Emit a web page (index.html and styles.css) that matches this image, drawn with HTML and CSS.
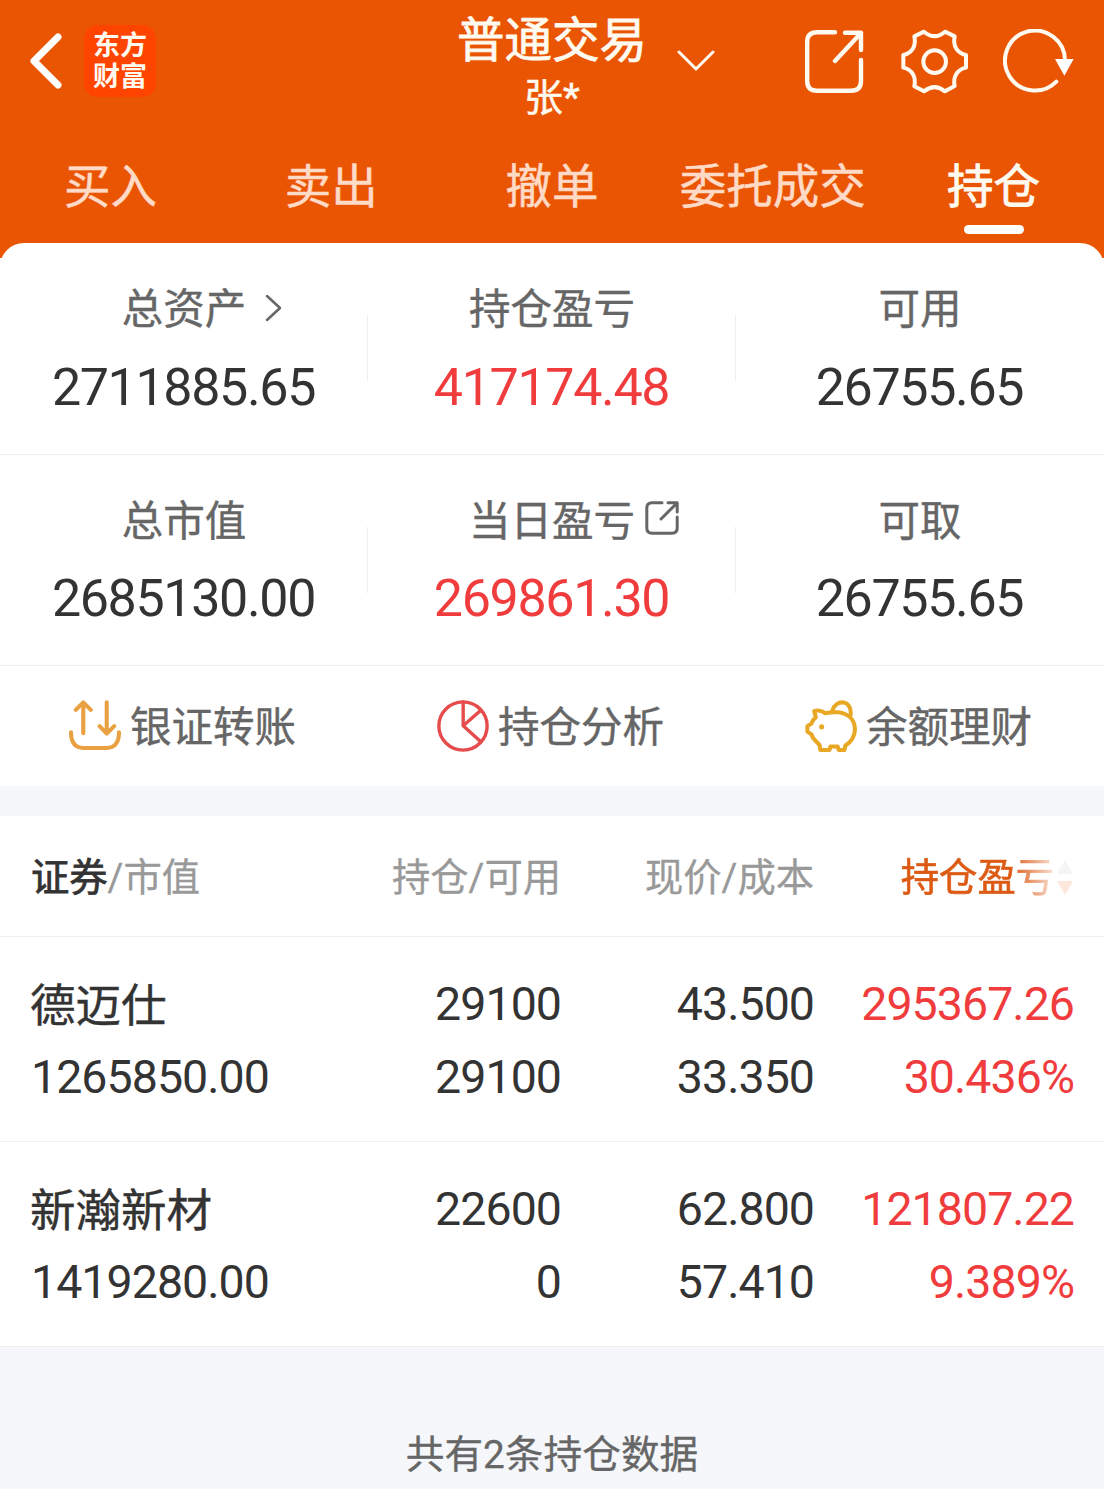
FILE: index.html
```html
<!DOCTYPE html>
<html lang="zh-CN">
<head>
    <meta charset="UTF-8">
    <meta name="viewport" content="width=device-width, initial-scale=1.0">
    <title>普通交易</title>
    <link rel="stylesheet" href="styles.css">
</head>
<body>
    <header class="header">
        <div class="topbar">
            <div class="topbar-left">
                <svg class="icon-back" viewBox="0 0 32 56" fill="none"><path d="M28 4L4 28L28 52"/></svg>
                <div class="logo"><span>东方</span><span>财富</span></div>
            </div>
            <div class="topbar-title">
                <div>
                    <h1>普通交易</h1>
                    <p>张*</p>
                </div>
                <svg class="icon-down" viewBox="0 0 38 22" fill="none"><path d="M2 2L19 19L36 2"/></svg>
            </div>
            <div class="topbar-right">
                <svg class="icon-share" viewBox="0 0 60 66" fill="none"><path d="M31 3.3H13Q3.2 3.3 3.2 13V52Q3.2 61.8 13 61.8H47Q57 61.8 57 52V31M31 32L57 4M41 3.8H57V21"/></svg>
                <svg class="icon-gear" viewBox="0 0 204 198" fill="none"><path d="M40 22L69 8Q101 35 132 8L161 22C155 50 168 72 195 78V116C168 122 155 144 161 171L132 187Q101 162 69 187L40 172C46 144 34 122 7 116V78C34 72 46 50 40 22Z"/><circle cx="101" cy="98" r="34"/></svg>
                <svg class="icon-refresh" viewBox="0 0 216 198" fill="none"><path d="M186 94A90 90 0 1 0 160 158"/><path class="arrow" d="M156 90H212L184 140Z"/></svg>
            </div>
        </div>
        <nav class="tabs">
            <a class="tab">买入</a>
            <a class="tab">卖出</a>
            <a class="tab">撤单</a>
            <a class="tab">委托成交</a>
            <a class="tab active">持仓</a>
        </nav>
    </header>

    <section class="summary">
        <div class="stats">
            <div class="stat">
                <div class="stat-label">总资产<svg class="icon-more" viewBox="0 0 17 28" fill="none"><path d="M2 2L15 14L2 26"/></svg></div>
                <div class="stat-value">2711885.65</div>
            </div>
            <div class="stat">
                <div class="stat-label">持仓盈亏</div>
                <div class="stat-value red">417174.48</div>
            </div>
            <div class="stat">
                <div class="stat-label">可用</div>
                <div class="stat-value">26755.65</div>
            </div>
        </div>
        <div class="stats">
            <div class="stat">
                <div class="stat-label">总市值</div>
                <div class="stat-value">2685130.00</div>
            </div>
            <div class="stat">
                <div class="stat-label">当日盈亏<svg class="icon-link" viewBox="0 0 34 34" fill="none"><path d="M17 1.8H7Q1.8 1.8 1.8 7V27Q1.8 32.2 7 32.2H27Q32.2 32.2 32.2 27V16M16 18L32 2M23 1.8H32.2V11"/></svg></div>
                <div class="stat-value red">269861.30</div>
            </div>
            <div class="stat">
                <div class="stat-label">可取</div>
                <div class="stat-value">26755.65</div>
            </div>
        </div>
        <div class="actions">
            <a class="action">
                <svg class="icon-action transfer" viewBox="0 0 153 153" fill="none"><path d="M42 98V8M20 29L42 7L64 29M111 7V98M90 77L111 99L133 77M6 95V100Q8 140 42 141H111Q145 140 147 100V95"/></svg>
                <span>银证转账</span>
            </a>
            <a class="action">
                <svg class="icon-action pie" viewBox="0 0 153 153" fill="none"><circle cx="76.500" cy="76.500" r="71"/><path d="M77 6V76L129 123M77 76L129 30"/></svg>
                <span>持仓分析</span>
            </a>
            <a class="action">
                <svg class="icon-action pig" viewBox="0 0 153 153" fill="none"><path d="M80 32C90 -4 140 -2 134 45"/><path d="M27 33Q42 27 60 39Q78 35 97 36C132 40 147 62 147 88Q145 118 119 134L116 147H99L96 137H75L72 147H45L43 133L24 112L19 101L7 93V77L19 69Q22 58 32 51Z"/><circle class="eye" cx="49" cy="79" r="7.500"/></svg>
                <span>余额理财</span>
            </a>
        </div>
    </section>

    <section class="holdings">
        <div class="row head">
            <div><b>证券</b>/市值</div>
            <div>持仓/可用</div>
            <div>现价/成本</div>
            <div class="sorted"><span>持仓盈亏</span><svg class="icon-sort" viewBox="0 0 18 36"><path fill="#f5f5f5" d="M9 0L17 14H1Z"/><path fill="#fde6dc" d="M1 21H17L9 35Z"/></svg></div>
        </div>
        <div class="row">
            <div class="name">德迈仕</div>
            <div>29100</div>
            <div>43.500</div>
            <div class="red">295367.26</div>
            <div>1265850.00</div>
            <div>29100</div>
            <div>33.350</div>
            <div class="red">30.436%</div>
        </div>
        <div class="row">
            <div class="name">新瀚新材</div>
            <div>22600</div>
            <div>62.800</div>
            <div class="red">121807.22</div>
            <div>1419280.00</div>
            <div>0</div>
            <div>57.410</div>
            <div class="red">9.389%</div>
        </div>
    </section>

    <footer class="footer">共有2条持仓数据</footer>
</body>
</html>
```
FILE: styles.css
```css
* {
    box-sizing: border-box;
}
body {
    width: 1104px;
    height: 1489px;
    margin: 0;
    overflow: hidden;
    display: flex;
    flex-direction: column;
    background-color: #fff;
    color: #333;
    font-family: Roboto, "Noto Sans CJK SC", sans-serif;
}
h1,
p {
    margin: 0;
}
svg {
    display: block;
    flex: none;
    stroke-linecap: round;
    stroke-linejoin: round;
}

/* header */
.header {
    height: 258px;
    flex: none;
    background-color: #ea5504;
    color: #fffaf0;
}
.topbar {
    height: 122px;
    display: grid;
    grid-template-columns: repeat(3, 368px);
}
.topbar-left,
.topbar-right {
    display: flex;
    align-items: center;
}
.topbar-left {
    padding-left: 30px;
    gap: 22px;
}
.icon-back {
    width: 32px;
    height: 56px;
    stroke: #fff;
    stroke-width: 7;
}
.logo {
    width: 72px;
    height: 72px;
    padding-top: 6px;
    border-radius: 14px;
    background-color: #ff4400;
    font-size: 27px;
    font-weight: 700;
    line-height: 31px;
    text-align: center;
}
.logo span {
    display: block;
}
.topbar-title {
    display: flex;
    align-items: center;
    justify-content: center;
    text-align: center;
}
.topbar-title h1 {
    padding-top: 5px;
    font-size: 47.500px;
    font-weight: 400;
    line-height: 68px;
    -webkit-text-stroke: 0.8px;
}
.topbar-title p {
    font-size: 39px;
    line-height: 46px;
    -webkit-text-stroke: 0.5px;
}
.icon-down {
    width: 38px;
    height: 22px;
    margin-left: 30px;
    margin-right: -68px;
    stroke: #fffaf0;
    stroke-width: 3;
}
.topbar-right {
    justify-content: flex-end;
    padding: 1px 29px 0 0;
    stroke: #fffaf0;
}
.icon-share {
    width: 60px;
    height: 66px;
    stroke-width: 4.4;
}
.icon-gear {
    width: 68px;
    height: 66px;
    margin: 0 34px 0 37px;
    stroke-width: 12;
}
.icon-refresh {
    width: 72px;
    height: 66px;
    stroke-width: 12;
}
.icon-refresh .arrow {
    fill: #fff;
    stroke: none;
}
.tabs {
    display: grid;
    grid-template-columns: repeat(5, 1fr);
}
.tab {
    display: flex;
    flex-direction: column;
    align-items: center;
    color: #ffdac6;
    font-size: 46.500px;
    line-height: 103px;
    padding-top: 14px;
    -webkit-text-stroke: 0.5px;
}
.tab.active {
    color: #fffaf0;
    -webkit-text-stroke: 0.9px;
}
.tab.active::after {
    content: "";
    width: 60px;
    height: 9px;
    margin-top: -14px;
    border-radius: 5px;
    background-color: #fff;
}

/* account summary */
.summary {
    flex: none;
    margin-top: -15px;
    border-radius: 24px 24px 0 0;
    background-color: #fff;
}
.stats {
    height: 211px;
    display: grid;
    grid-template-columns: repeat(3, 1fr);
    border-bottom: 1px solid #eee;
}
.stats:first-child {
    height: 212px;
}
.stat {
    padding-top: 37px;
    background: linear-gradient(#eee, #eee) no-repeat right 72px / 1px 66px;
}
.stat:last-child {
    background: none;
}
.stat-label {
    display: flex;
    justify-content: center;
    align-items: center;
    color: #666;
    font-size: 41.500px;
    line-height: 60px;
    -webkit-text-stroke: 0.4px;
}
.icon-more {
    width: 17px;
    height: 28px;
    margin: -4px -36px 0 19px;
    stroke: #666;
    stroke-width: 2.5;
}
.icon-link {
    width: 34px;
    height: 34px;
    margin: -8px -44px 0 10px;
    stroke: #666;
    stroke-width: 3;
}
.stat-value {
    margin-top: 18px;
    padding-right: 1px;
    font-size: 52px;
    letter-spacing: -1.35px;
    line-height: 60px;
    text-align: center;
}
.stats:nth-child(2) .stat-value {
    margin-top: 17px;
}
.red {
    color: #f03c3c;
}
.actions {
    height: 120px;
    display: grid;
    grid-template-columns: repeat(3, 1fr);
}
.action {
    display: flex;
    align-items: center;
    gap: 9px;
    padding-left: 69px;
    color: #666;
    font-size: 41.500px;
    line-height: 60px;
}
.action span {
    padding-top: 4px;
    -webkit-text-stroke: 0.4px;
}
.icon-action {
    width: 52px;
    height: 52px;
    stroke-width: 12;
}
.transfer {
    stroke: #e8a040;
}
.pie {
    stroke: #e64c4c;
    stroke-width: 10;
}
.pig {
    stroke: #e9a823;
}
.pig .eye {
    fill: #e9a823;
    stroke: none;
}

/* holdings list */
.holdings {
    flex: none;
    border-top: 30px solid #f5f7fa;
}
.row {
    height: 205px;
    display: grid;
    grid-template-columns: 280px 251px 253px 260px;
    grid-auto-rows: 73px;
    padding: 31px 30px 0;
    border-bottom: 1px solid #eee;
    font-size: 46.500px;
    letter-spacing: -0.95px;
    line-height: 73px;
    text-align: right;
}
.row > :nth-child(4n + 1) {
    padding-left: 1px;
    text-align: left;
}
.row > .name:first-child {
    padding: 2px 0 0;
    font-size: 45.500px;
    letter-spacing: 0;
    -webkit-text-stroke: 0.4px;
}
.row.head {
    height: 121px;
    grid-auto-rows: 116px;
    padding-top: 4px;
    color: #999;
    font-size: 38.300px;
    letter-spacing: 0;
    line-height: 116px;
    -webkit-text-stroke: 0.3px;
}
.head b {
    color: #333;
    font-weight: 400;
    -webkit-text-stroke: 0.8px;
}
.sorted {
    display: flex;
    align-items: center;
    justify-content: flex-end;
}
.sorted span {
    margin-right: 2px;
    background: linear-gradient(to right, #dc5a14 72%, #f8e0d4 100%);
    -webkit-background-clip: text;
    background-clip: text;
    color: transparent;
    -webkit-text-stroke: 0.7px transparent;
}
.icon-sort {
    width: 18px;
    height: 36px;
    stroke: none;
}

.footer {
    flex: 1;
    padding-top: 78px;
    background-color: #f5f7fa;
    color: #666;
    font-size: 38.700px;
    line-height: 60px;
    text-align: center;
    -webkit-text-stroke: 0.3px;
}
```
